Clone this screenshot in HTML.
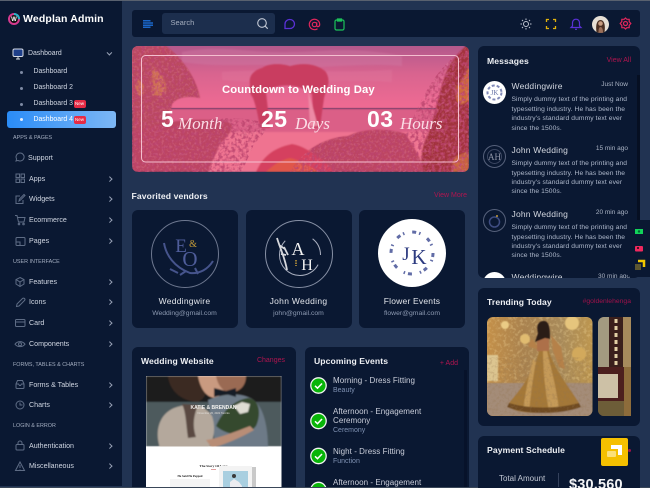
<!DOCTYPE html>
<html><head><meta charset="utf-8"><style>
*{box-sizing:border-box;margin:0;padding:0}
html,body{width:650px;height:488px;overflow:hidden;background:#213352;font-family:"Liberation Sans",sans-serif}
#r{position:relative;width:650px;height:488px;overflow:hidden;filter:blur(.3px)}
.a,.t{position:absolute}
.t{white-space:nowrap;line-height:12px;height:12px}
.card{position:absolute;background:#0a1832;border-radius:6px}
.nav{font-size:7.1px;color:#d0d6e2}
.sub{font-size:6.9px;color:#d0d6e2}
.sec{font-size:5.4px;color:#a3adc0}
.ar{position:absolute;left:108px;width:3.500px;height:3.500px;border-top:1px solid #98a2b6;border-right:1px solid #98a2b6;transform:rotate(45deg)}
.dot{position:absolute;left:20px;width:3px;height:3px;border-radius:50%;background:#7e8aa3}
.new{position:absolute;height:8px;width:12px;border-radius:2px;background:#e62b45;color:#fff;font-size:4.5px;line-height:8px;text-align:center}
.h{font-weight:bold;font-size:8.6px;color:#eef0f4;letter-spacing:.1px}
.pk{font-size:7px;color:#b0154f}
.nm{font-size:8.5px;color:#d3d7e0;letter-spacing:.2px}
.tm{font-size:6.500px;color:#aab3c4}
.ms{font-size:6.700px;color:#aeb8cb;letter-spacing:.1px}
.ev{font-size:8px;color:#c9cdd9;letter-spacing:.05px}
.sb{font-size:7px;color:#7f91b2}
.sc{font-family:'Liberation Serif',serif;font-style:italic;font-size:17px;line-height:20px;height:20px;color:#fbdde6}
.num{font-size:23px;line-height:26px;height:26px;font-weight:bold;color:#fff;letter-spacing:.4px}
svg{position:absolute;overflow:visible}
</style></head><body><div id="r">
<div class="a" style="left:0;top:0;width:650px;height:1px;background:#59616f"></div>

<!-- sidebar -->
<div class="a" style="left:0;top:1px;width:122px;height:485px;background:#0a1832"></div>
<svg style="left:7px;top:12px" width="14" height="14" viewBox="0 0 14 14"><circle cx="7" cy="7" r="5" fill="#111" stroke="#d63a8f" stroke-width="2"/><path d="M7 2a5 5 0 0 1 5 5" fill="none" stroke="#27b6c9" stroke-width="2"/><text x="7" y="9" font-size="6" font-weight="bold" fill="#fff" text-anchor="middle" font-family="Liberation Sans">W</text></svg>
<div class="t" style="left:23px;top:13px;font-size:10.500px;font-weight:bold;color:#fff;letter-spacing:.15px">Wedplan Admin</div>

<svg style="left:12px;top:48px" width="12" height="12" viewBox="0 0 12 12"><rect x="1" y="1" width="10" height="7.500" rx="1.500" fill="#1f3f8a" stroke="#d7dbe5" stroke-width="1"/><path d="M4 11h4M6 9v2" stroke="#d7dbe5"/></svg>
<div class="t nav" style="left:28px;top:48px;font-size:6.900px">Dashboard</div>
<div class="ar" style="top:51px;transform:rotate(135deg)"></div>
<div class="dot" style="top:71px"></div><div class="t sub" style="left:33.500px;top:66px">Dashboard</div>
<div class="dot" style="top:87px"></div><div class="t sub" style="left:33.500px;top:82px">Dashboard 2</div>
<div class="dot" style="top:103px"></div><div class="t sub" style="left:33.500px;top:98px">Dashboard 3</div><div class="new" style="left:73.500px;top:100px">New</div>
<div class="a" style="left:7px;top:111px;width:108.500px;height:17px;border-radius:3px;background:linear-gradient(90deg,#2a8cf7,#7db7f5)"></div>
<div class="dot" style="top:118px;background:#e5eefc"></div><div class="t sub" style="left:33.500px;top:113.500px;color:#fff">Dashboard 4</div><div class="new" style="left:73.500px;top:116px">New</div>

<div class="t sec" style="left:13px;top:132px">APPS &amp; PAGES</div>
<svg style="left:14px;top:151px" width="12" height="12" viewBox="0 0 12 12" fill="none" stroke="#5e6c85"><path d="M6 2a4 4 0 1 1-2 7.400L2 10l.6-2A4 4 0 0 1 6 2z"/></svg>
<div class="t nav" style="left:28px;top:152px">Support</div>
<svg style="left:14px;top:172px" width="12" height="12" viewBox="0 0 12 12" fill="none" stroke="#5e6c85"><rect x="2" y="2" width="3.500" height="3.500"/><rect x="7" y="2" width="3.500" height="3.500"/><rect x="2" y="7" width="3.500" height="3.500"/><rect x="7" y="7" width="3.500" height="3.500"/></svg>
<div class="t nav" style="left:29px;top:172.500px">Apps</div><div class="ar" style="top:176.500px"></div>
<svg style="left:14px;top:193px" width="12" height="12" viewBox="0 0 12 12" fill="none" stroke="#5e6c85"><path d="M9 7v3.500H2V3h4M5 8l.5-2L10 1.500l1 1L6.500 7z"/></svg>
<div class="t nav" style="left:29px;top:193px">Widgets</div><div class="ar" style="top:197px"></div>
<svg style="left:14px;top:214px" width="12" height="12" viewBox="0 0 12 12" fill="none" stroke="#5e6c85"><path d="M1 1.500h2l1.500 6.500h5.500l1-4.500H3.500"/><circle cx="5" cy="10" r=".8"/><circle cx="9.500" cy="10" r=".8"/></svg>
<div class="t nav" style="left:29px;top:214px">Ecommerce</div><div class="ar" style="top:218px"></div>
<svg style="left:14px;top:235px" width="12" height="12" viewBox="0 0 12 12" fill="none" stroke="#5e6c85"><rect x="2" y="2.500" width="9" height="8" rx="1"/><path d="M2 7h4v3.500"/></svg>
<div class="t nav" style="left:29px;top:235px">Pages</div><div class="ar" style="top:239px"></div>

<div class="t sec" style="left:13px;top:256px">USER INTERFACE</div>
<svg style="left:14px;top:276px" width="12" height="12" viewBox="0 0 12 12" fill="none" stroke="#5e6c85"><path d="M6 1.500l4 2v4.500l-4 2.500-4-2.500V3.500zM2 3.500l4 2.500 4-2.500M6 6v4.500"/></svg>
<div class="t nav" style="left:29px;top:275.500px">Features</div><div class="ar" style="top:279.500px"></div>
<svg style="left:14px;top:296px" width="12" height="12" viewBox="0 0 12 12" fill="none" stroke="#5e6c85"><path d="M2.500 10.500l.5-2.500L8.500 2.500a1.400 1.400 0 0 1 2 2L5 10z"/></svg>
<div class="t nav" style="left:29px;top:296px">Icons</div><div class="ar" style="top:300px"></div>
<svg style="left:14px;top:317px" width="12" height="12" viewBox="0 0 12 12" fill="none" stroke="#5e6c85"><rect x="1.500" y="2.500" width="9.500" height="7" rx="1"/><path d="M1.500 5h9.500"/></svg>
<div class="t nav" style="left:29px;top:317px">Card</div><div class="ar" style="top:321px"></div>
<svg style="left:14px;top:338px" width="12" height="12" viewBox="0 0 12 12" fill="none" stroke="#5e6c85"><path d="M1 6.200C3.500 2.800 8.500 2.800 11 6.200 8.500 9.500 3.500 9.500 1 6.200z"/><circle cx="6" cy="6.200" r="1.500"/></svg>
<div class="t nav" style="left:29px;top:338px">Components</div><div class="ar" style="top:342px"></div>

<div class="t sec" style="left:13px;top:358.500px">FORMS, TABLES &amp; CHARTS</div>
<svg style="left:14px;top:378px" width="12" height="12" viewBox="0 0 12 12" fill="none" stroke="#5e6c85"><path d="M2 6l1.500-3.500h5L10 6v3.500a1 1 0 0 1-1 1H3a1 1 0 0 1-1-1zM2 6h2.500l1 1.500h1L7.500 6H10"/></svg>
<div class="t nav" style="left:29px;top:378.500px">Forms &amp; Tables</div><div class="ar" style="top:382.500px"></div>
<svg style="left:14px;top:399px" width="12" height="12" viewBox="0 0 12 12" fill="none" stroke="#5e6c85"><circle cx="6" cy="6" r="4"/><path d="M6 3.500V6h2.500"/></svg>
<div class="t nav" style="left:29px;top:399px">Charts</div><div class="ar" style="top:403px"></div>

<div class="t sec" style="left:13px;top:420px">LOGIN &amp; ERROR</div>
<svg style="left:14px;top:439px" width="12" height="12" viewBox="0 0 12 12" fill="none" stroke="#5e6c85"><rect x="2" y="5.500" width="8" height="5.500" rx="1"/><path d="M4 5.500V4a2 2 0 0 1 4 0v1.500"/></svg>
<div class="t nav" style="left:29px;top:439.500px">Authentication</div><div class="ar" style="top:443.500px"></div>
<svg style="left:14px;top:460px" width="12" height="12" viewBox="0 0 12 12" fill="none" stroke="#5e6c85"><path d="M6 2l4.500 8.500h-9zM6 5v3M6 9v.5"/></svg>
<div class="t nav" style="left:29px;top:460px">Miscellaneous</div><div class="ar" style="top:464px"></div>

<!-- topbar -->
<div class="card" style="left:131.500px;top:10px;width:508.500px;height:27px;border-radius:3px"></div>
<svg style="left:142.500px;top:20px" width="10" height="8" viewBox="0 0 10 8"><path d="M0 .8h7.500M0 3h10M0 5.200h10M0 7.300h7.500" stroke="#1a66c8" stroke-width="1.500"/></svg>
<div class="a" style="left:161.500px;top:13px;width:113px;height:21px;border-radius:3px;background:#1c2e4d"></div>
<div class="t" style="left:170.500px;top:17px;font-size:7.500px;color:#a4adbe">Search</div>
<svg style="left:256px;top:17px" width="13" height="13" viewBox="0 0 13 13" fill="none" stroke="#c4cad6" stroke-width="1.100"><circle cx="6" cy="6" r="4.300"/><path d="M9.200 9.200l2.500 2.500"/></svg>
<svg style="left:283px;top:18px" width="13" height="13" viewBox="0 0 13 13" fill="none" stroke="#5a31d6" stroke-width="1.300"><path d="M7 1.500a4.500 4.500 0 0 1 0 9H2V6.200A4.600 4.600 0 0 1 7 1.500z"/></svg>
<svg style="left:308px;top:17.500px" width="13" height="13" viewBox="0 0 13 13" fill="none" stroke="#e0275c" stroke-width="1.200"><circle cx="6.500" cy="6.500" r="2.200"/><path d="M8.700 4.300v3.200c0 1.800 3 1.500 3-1A5.200 5.200 0 1 0 9.500 10.700"/></svg>
<svg style="left:333px;top:17.500px" width="13" height="13" viewBox="0 0 13 13" fill="none" stroke="#1cc15a" stroke-width="1.200"><rect x="2" y="2" width="9" height="10" rx="1.500"/><path d="M4.500 1h4v2h-4z"/></svg>
<svg style="left:520px;top:18px" width="12" height="12" viewBox="0 0 12 12" fill="none" stroke="#bfc5d1" stroke-width="1"><circle cx="6" cy="6" r="2.500"/><path d="M6 .5v1.500M6 10v1.500M.5 6H2M10 6h1.500M2 2l1 1M9 9l1 1M2 10l1-1M9 3l1-1"/></svg>
<svg style="left:545px;top:18px" width="12" height="12" viewBox="0 0 12 12" fill="none" stroke="#e2b30d" stroke-width="1.300"><path d="M1.500 4V1.500H4M8 1.500h2.500V4M10.500 8v2.500H8M4 10.500H1.500V8"/></svg>
<svg style="left:570px;top:17.500px" width="12" height="12" viewBox="0 0 12 12" fill="none" stroke="#5a31d6" stroke-width="1.200"><path d="M6 1.200A3.500 3.500 0 0 0 2.500 4.700v3.300L1 9.500h10L9.500 8V4.700A3.500 3.500 0 0 0 6 1.200zM5 11.300h2"/></svg>
<svg style="left:592px;top:15.500px" width="17" height="17" viewBox="0 0 17 17"><circle cx="8.500" cy="8.500" r="8.500" fill="#e6dfd5"/><path d="M4.500 16c-1-6 0-12 4-12s5 6 4 12c-2 1.300-6 1.300-8 0z" fill="#4a2f22"/><path d="M6.500 16.500c0-3.500.5-5.500 2-5.500s2.500 2 2.500 5.500c-1.500.5-3 .5-4.500 0z" fill="#9b6f5a"/><circle cx="8.500" cy="7.500" r="2.300" fill="#c79c80"/></svg>
<svg style="left:619px;top:17px" width="13" height="13" viewBox="0 0 13 13" fill="none" stroke="#e0275c" stroke-width="1.200"><path d="M6.500 1l1.300 1.300h2.400v2.400L11.800 6.500l-1.600 1.800v2.400H7.800L6.500 12 5.200 10.700H2.800V8.300L1.200 6.500l1.600-1.800V2.300h2.400z"/><circle cx="6.500" cy="6.500" r="2"/></svg>

<!-- banner -->
<svg style="left:131.500px;top:46px" width="337" height="126" viewBox="0 0 337 126">
<defs><linearGradient id="s" x1="0" y1="0" x2="0" y2="1"><stop offset="0" stop-color="#b3598c"/><stop offset=".45" stop-color="#d9648f"/><stop offset="1" stop-color="#f06b93"/></linearGradient>
<filter id="n" x="0" y="0" width="100%" height="100%"><feTurbulence type="fractalNoise" baseFrequency=".3" numOctaves="2" seed="4"/><feColorMatrix values="0 0 0 0 .5 0 0 0 0 .06 0 0 0 0 .16 4 0 0 0 -1.700"/></filter>
<filter id="n2" x="0" y="0" width="100%" height="100%"><feTurbulence type="fractalNoise" baseFrequency=".4" numOctaves="2" seed="9"/><feColorMatrix values="0 0 0 0 .9 0 0 0 0 .36 0 0 0 0 .42 4 0 0 0 -1.900"/></filter>
<filter id="b1" x="-10%" y="-10%" width="120%" height="120%"><feGaussianBlur stdDeviation=".9"/></filter>
<clipPath id="bc"><rect width="337" height="126" rx="6"/></clipPath>
<clipPath id="tc"><path d="M0 0h34c14 10 30 30 34 52-10-2-22-2-28 6l-6 26c22-10 66-16 96-8 10 4 0 14-8 22l-12 28H0zM158 126c10-18 30-34 58-36 16-8 40-8 58-2 10-20 24-66 63-88v126z"/></clipPath></defs>
<g clip-path="url(#bc)">
<rect width="337" height="62" fill="url(#s)"/>
<g filter="url(#b1)">
<path d="M50 6c40-8 70 2 110 0 30 0 60-6 110 4v10c-40-4-90 4-120 0-30-3-60 2-100-4z" fill="#d07aa5" opacity=".4"/>
<path d="M90 26c50-4 100 2 170-2v12c-60-4-110 4-170-2z" fill="#e47fa5" opacity=".25"/>
<rect y="62" width="337" height="28" fill="#db5f87"/>
<rect y="62" width="337" height="1.500" fill="#b04c78"/>
<rect y="86" width="337" height="40" fill="#ef7390"/>
<path d="M0 0h34c14 10 30 30 34 52-10-2-22-2-28 6l-6 28H0z" fill="#bb4a60"/>
<path d="M20 20c8 6 14 14 14 22s-8 10-14 6zM6 34c6 2 8 10 4 16-6 0-8-10-4-16z" fill="#cf6e55"/>
<path d="M0 86c22-10 66-16 96-10 10 4 0 14-8 22l-12 28H0z" fill="#bd4563"/>
<path d="M158 126c10-18 30-34 58-36 16-8 40-8 58-2l22 38z" fill="#bd4462"/>
<path d="M337 0v126h-44c-6-8-4-26 4-40 6-16 10-40 16-56 4-12 12-22 21-30z" fill="#a2303d"/>
<path d="M325 40c6-6 10-16 12-20v34c-6 6-16 8-12-14z" fill="#cf6a3b"/>
<path d="M322 112c6-4 12-6 15-6v20h-18z" fill="#c9653c"/>
<path d="M118 38c-2-8 4-14 12-16 8-6 22-4 28-2 14-4 28-2 36 6 6 10 0 18-2 26l-4 30h-6l-2-34c-12-10-34-12-46-2l4 36h-10c-2-12-4-22-7-30-3-4-4-8-3-14z" fill="#c93c60"/>
<path d="M176 44l10 36h-8z" fill="#ed8aa5"/>
<path d="M124 126c6-14 16-24 36-28 14 2 32 16 42 28z" fill="#d5415f"/>
<path d="M134 126c6-6 14-12 24-14 10 2 20 8 28 14z" fill="#e4603f" opacity=".7"/>
</g>
<g clip-path="url(#tc)"><rect width="337" height="126" filter="url(#n)" opacity=".85"/><rect width="337" height="126" filter="url(#n2)" opacity=".2"/></g>
</g>
<rect x="9.500" y="9.500" width="317" height="106.500" rx="4" fill="none" stroke="#f4bfcf" stroke-width="1"/>
</svg>
<div class="t" style="left:222px;top:84px;font-size:11.300px;font-weight:bold;color:#fff;letter-spacing:.1px">Countdown to Wedding Day</div>
<div class="t num" style="left:161px;top:106px">5</div>
<div class="t sc" style="left:178px;top:114px">Month</div>
<div class="t num" style="left:261px;top:106px">25</div>
<div class="t sc" style="left:295px;top:114px">Days</div>
<div class="t num" style="left:367px;top:106px">03</div>
<div class="t sc" style="left:400px;top:114px">Hours</div>

<!-- vendors -->
<div class="t h" style="left:131.500px;top:190px">Favorited vendors</div>
<div class="t pk" style="right:183px;top:190px">View More</div>
<div class="card" style="left:131.500px;top:209.500px;width:106px;height:118px"></div>
<div class="card" style="left:245.500px;top:209.500px;width:106px;height:118px"></div>
<div class="card" style="left:359px;top:209.500px;width:106px;height:118px"></div>
<svg style="left:150px;top:219px" width="70" height="70" viewBox="0 0 70 70" fill="none"><circle cx="35" cy="35" r="33.500" stroke="#6e7890"/><text x="31" y="33" font-size="19" fill="#4f5d9a" font-family="Liberation Serif" text-anchor="middle">E</text><text x="43" y="28" font-size="10" fill="#c49b38" font-family="Liberation Serif" text-anchor="middle">&amp;</text><text x="40" y="47" font-size="21" fill="#4f5d9a" font-family="Liberation Serif" text-anchor="middle">O</text><path d="M14 24c2 12 10 24 26 30 10 1 18-4 23-12M20 50l8 4M30 56l6-4M48 55l-3-6" stroke="#46548c" stroke-width="2"/></svg>
<svg style="left:264px;top:219px" width="70" height="70" viewBox="0 0 70 70" fill="none"><circle cx="35" cy="35" r="33.500" stroke="#8790a5"/><circle cx="36" cy="36" r="20.500" stroke="#a9afbf" stroke-dasharray="70 30" stroke-dashoffset="-10"/><text x="34" y="36" font-size="18" fill="#f1f1f1" font-family="Liberation Serif" text-anchor="middle">A</text><text x="43" y="51" font-size="16" fill="#f1f1f1" font-family="Liberation Serif" text-anchor="middle">H</text><path d="M13 19c3 10 8 20 10 32M15 26l6 4M17 35l5 1M24 36l-4-8" stroke="#d6d8dd" stroke-width="1.800"/><path d="M32 41v6" stroke="#c49b38" stroke-dasharray="1.500 1" stroke-width="1.500"/></svg>
<svg style="left:378px;top:219px" width="68" height="68" viewBox="0 0 68 68" fill="none"><circle cx="34" cy="34" r="34" fill="#fff"/><circle cx="34" cy="34" r="21" stroke="#3a4790" stroke-width="3" stroke-dasharray="4 3 1.500 8" opacity=".8"/><text x="28" y="41" font-size="19" fill="#2d3b80" font-family="Liberation Serif" text-anchor="middle">J</text><text x="41" y="45" font-size="21" fill="#2d3b80" font-family="Liberation Serif" text-anchor="middle">K</text></svg>
<div class="t" style="left:131.500px;width:106px;text-align:center;top:295px;font-size:8.500px;color:#e1e4ea;letter-spacing:.25px">Weddingwire</div>
<div class="t" style="left:131.500px;width:106px;text-align:center;top:307.500px;font-size:6.800px;color:#8d9ab2">Wedding@gmail.com</div>
<div class="t" style="left:245.500px;width:106px;text-align:center;top:295px;font-size:8.500px;color:#e1e4ea;letter-spacing:.3px">John Wedding</div>
<div class="t" style="left:245.500px;width:106px;text-align:center;top:307.500px;font-size:6.800px;color:#8d9ab2">john@gmail.com</div>
<div class="t" style="left:359px;width:106px;text-align:center;top:295px;font-size:8.500px;color:#e1e4ea;letter-spacing:.2px">Flower Events</div>
<div class="t" style="left:359px;width:106px;text-align:center;top:307.500px;font-size:6.800px;color:#8d9ab2">flower@gmail.com</div>

<!-- website -->
<div class="card" style="left:131.500px;top:347px;width:164px;height:150px"></div>
<div class="t h" style="left:141px;top:355px">Wedding Website</div>
<div class="t pk" style="right:365px;top:355px">Changes</div>
<svg style="left:145.500px;top:375.500px" width="135.500" height="113" viewBox="0 0 135.500 113">
<defs><filter id="b2" x="-5%" y="-5%" width="110%" height="110%"><feGaussianBlur stdDeviation=".9"/></filter><clipPath id="pc"><rect width="135.500" height="70.500"/></clipPath></defs>
<rect width="135.500" height="113" fill="#fff"/>
<g clip-path="url(#pc)"><g filter="url(#b2)">
<rect width="135.500" height="70.500" fill="#4d5a5d"/>
<rect width="135.500" height="26" fill="#1f1b1a"/>
<path d="M22 0h38c4 12 0 22-8 26-12 0-28-8-30-26z" fill="#3a2a22"/>
<path d="M52 0h28c2 10-2 18-10 22-10 0-16-10-18-22z" fill="#c99a80"/>
<path d="M70 0h30c0 8-4 14-12 16-10 2-16-6-18-16z" fill="#9a6a52"/>
<path d="M62 24c14-6 30-8 42-2 14 6 18 30 18 50H70z" fill="#6d7a87"/>
<path d="M68 12l12 3 10-3v9l-10-3-12 3z" fill="#161c28"/>
<path d="M14 72c-6-18 0-34 14-40 16-6 30-4 38 8 4 12 2 24-4 32z" fill="#b4a89c"/>
<path d="M36 28c4 8 4 20 6 34l8-1c-4-12-2-22 2-32z" fill="#5a4a42"/>
<path d="M70 50c6-14 18-26 32-28 14 2 12 20 8 28-8 10-26 12-40 0z" fill="#36482f"/>
<path d="M88 30l8-4 8 2-2 8-8 2z" fill="#dedcd2"/>
<path d="M60 64c14-2 28-8 44-14l4 4c-14 8-28 14-42 18z" fill="#b88d76"/>
</g></g>
<text x="67.500" y="33" font-size="5" font-weight="bold" fill="#f4f3f0" text-anchor="middle" font-family="Liberation Sans">KATIE &amp; BRENDAN</text>
<text x="67.500" y="38" font-size="2.600" fill="#e0ddd8" text-anchor="middle" font-family="Liberation Sans">November 20, 2021 Toronto</text>
<text x="67.500" y="91" font-size="3.500" font-weight="bold" fill="#222" text-anchor="middle" font-family="Liberation Serif">The Story Of Love</text>
<rect x="65" y="93" width="5" height="1" fill="#e0a0a0"/>
<text x="44" y="101" font-size="3" font-weight="bold" fill="#222" text-anchor="middle" font-family="Liberation Serif">He Said He Popped</text>
<path d="M24 104h40M24 106h40M24 108h40M24 110h40" stroke="#e2e2e2" stroke-width=".8"/>
<rect x="75" y="91" width="35" height="22" fill="#c9c9c9"/><rect x="73" y="90" width="33" height="23" fill="#f3f3f3"/><rect x="77" y="95" width="25" height="18" fill="#a9cfe0"/><path d="M84 113v-7l4-3 5 3 3 4v3z" fill="#ececf0"/><circle cx="88" cy="100" r="2" fill="#3a3a3a"/>
</svg>

<!-- events -->
<div class="card" style="left:304.500px;top:347px;width:164px;height:150px"></div>
<div class="t h" style="left:314px;top:355px">Upcoming Events</div>
<div class="t pk" style="right:192px;top:357.500px">+ Add</div>
<div class="a" style="left:464px;top:370px;width:3px;height:118px;background:#07122a"></div>
<svg style="left:310px;top:377px" width="17" height="111" viewBox="0 0 17 111">
<g><circle cx="8.500" cy="8.500" r="7.700" fill="#08b508" stroke="#f2f4f2" stroke-width="1.300"/><path d="M5 8.800l2.500 2.400 4.500-4.700" fill="none" stroke="#fff" stroke-width="1.500"/></g>
<g transform="translate(0,35.500)"><circle cx="8.500" cy="8.500" r="7.700" fill="#08b508" stroke="#f2f4f2" stroke-width="1.300"/><path d="M5 8.800l2.500 2.400 4.500-4.700" fill="none" stroke="#fff" stroke-width="1.500"/></g>
<g transform="translate(0,70.500)"><circle cx="8.500" cy="8.500" r="7.700" fill="#08b508" stroke="#f2f4f2" stroke-width="1.300"/><path d="M5 8.800l2.500 2.400 4.500-4.700" fill="none" stroke="#fff" stroke-width="1.500"/></g>
<g transform="translate(0,104.500)"><circle cx="8.500" cy="8.500" r="7.700" fill="#08b508" stroke="#f2f4f2" stroke-width="1.300"/></g>
</svg>
<div class="t ev" style="left:333px;top:375px">Morning - Dress Fitting</div><div class="t sb" style="left:333px;top:384.500px">Beauty</div>
<div class="t ev" style="left:333px;top:406px">Afternoon - Engagement</div><div class="t ev" style="left:333px;top:415px">Ceremony</div><div class="t sb" style="left:333px;top:425px">Ceremony</div>
<div class="t ev" style="left:333px;top:446px">Night - Dress Fitting</div><div class="t sb" style="left:333px;top:455.500px">Function</div>
<div class="t ev" style="left:333px;top:477px">Afternoon - Engagement</div>

<!-- bottom strip -->
<div class="a" style="left:0;top:486.500px;width:650px;height:2px;background:#3a4759"></div>

<!-- messages -->
<div class="card" style="left:477.500px;top:46px;width:162.500px;height:232px;overflow:hidden">
<div class="a" style="left:159.500px;top:29px;width:3px;height:203px;background:#060f22"></div>
</div>
<div class="t h" style="left:487px;top:55px">Messages</div>
<div class="t pk" style="right:19px;top:55px">View All</div>
<svg style="left:483px;top:81px" width="23" height="23" viewBox="0 0 23 23" fill="none"><circle cx="11.500" cy="11.500" r="11.500" fill="#fff"/><circle cx="11.500" cy="11.500" r="7" stroke="#8089b8" stroke-width="2" stroke-dasharray="3 2"/><text x="11.500" y="14" font-size="7" fill="#6a76a8" text-anchor="middle" font-family="Liberation Serif">JK</text></svg>
<svg style="left:483px;top:145px" width="23" height="23" viewBox="0 0 23 23" fill="none"><circle cx="11.500" cy="11.500" r="11" stroke="#56617b"/><circle cx="11.500" cy="11.500" r="7" stroke="#3c4762"/><text x="11.500" y="15" font-size="9" fill="#8f95a6" text-anchor="middle" font-family="Liberation Serif">AH</text></svg>
<svg style="left:483px;top:209px" width="23" height="23" viewBox="0 0 23 23" fill="none"><circle cx="11.500" cy="11.500" r="11" stroke="#56617b"/><circle cx="11.500" cy="13" r="5" stroke="#3e4c80" stroke-width="1.500"/><circle cx="14" cy="7" r="1" fill="#c49b38"/></svg>

<div class="t nm" style="left:511.500px;top:79.500px">Weddingwire</div><div class="t tm" style="right:22px;top:78.500px">Just Now</div>
<div class="t ms" style="left:511.500px;top:94px">Simply dummy text of the printing and</div>
<div class="t ms" style="left:511.500px;top:103.500px">typesetting industry. He has been the</div>
<div class="t ms" style="left:511.500px;top:113px">industry's standard dummy text ever</div>
<div class="t ms" style="left:511.500px;top:122.500px">since the 1500s.</div>

<div class="t nm" style="left:511.500px;top:143.500px">John Wedding</div><div class="t tm" style="right:22px;top:142.500px">15 min ago</div>
<div class="t ms" style="left:511.500px;top:158px">Simply dummy text of the printing and</div>
<div class="t ms" style="left:511.500px;top:167.500px">typesetting industry. He has been the</div>
<div class="t ms" style="left:511.500px;top:177px">industry's standard dummy text ever</div>
<div class="t ms" style="left:511.500px;top:186px">since the 1500s.</div>

<div class="t nm" style="left:511.500px;top:207.500px">John Wedding</div><div class="t tm" style="right:22px;top:206.500px">20 min ago</div>
<div class="t ms" style="left:511.500px;top:222px">Simply dummy text of the printing and</div>
<div class="t ms" style="left:511.500px;top:231.500px">typesetting industry. He has been the</div>
<div class="t ms" style="left:511.500px;top:241px">industry's standard dummy text ever</div>
<div class="t ms" style="left:511.500px;top:250px">since the 1500s.</div>

<div class="a" style="left:480px;top:272px;width:155px;height:6px;overflow:hidden">
<div class="a" style="left:3px;top:0;width:23px;height:23px;border-radius:50%;background:#fff"></div>
<div class="t nm" style="left:31.500px;top:-1px">Weddingwire</div><div class="t tm" style="left:118px;top:-1px">30 min ago</div></div>

<!-- side floater -->
<div class="a" style="left:627px;top:220px;width:23px;height:57px;border-radius:4px 0 0 4px;background:#0a1832"></div>
<svg style="left:634px;top:226px" width="12" height="46" viewBox="0 0 12 46"><rect x="1" y="3" width="8" height="5" fill="#12d35a"/><circle cx="5" cy="5.500" r="1.200" fill="#063"/><rect x="1" y="20" width="8" height="5.500" rx="1" fill="#f0285e"/><circle cx="4" cy="22" r="1" fill="#111"/><rect x="1" y="38" width="6" height="6" fill="#5c5630"/><path d="M4 35h6v6" fill="none" stroke="#f3c800" stroke-width="2.500"/></svg>

<!-- trending -->
<div class="card" style="left:477.500px;top:288px;width:162.500px;height:138px"></div>
<div class="t h" style="left:487px;top:296px">Trending Today</div>
<div class="t" style="right:19px;top:296px;font-size:6.800px;color:#a0124a">#goldenlehenga</div>
<svg style="left:487px;top:317px" width="105.500" height="99" viewBox="0 0 105.500 99">
<defs><linearGradient id="tr" x1="0" y1="0" x2="1" y2="0"><stop offset="0" stop-color="#c49049"/><stop offset=".35" stop-color="#a9824f"/><stop offset=".7" stop-color="#a88a5a"/><stop offset="1" stop-color="#bd964f"/></linearGradient>
<clipPath id="tc1"><rect width="105.500" height="99" rx="6"/></clipPath><filter id="b3" x="-5%" y="-5%" width="110%" height="110%"><feGaussianBlur stdDeviation=".5"/></filter>
<filter id="n3" x="0" y="0" width="100%" height="100%"><feTurbulence type="fractalNoise" baseFrequency=".3" numOctaves="2" seed="7"/><feColorMatrix values="0 0 0 0 .92 0 0 0 0 .72 0 0 0 0 .36 4 0 0 0 -1.900"/></filter>
<filter id="n4" x="0" y="0" width="100%" height="100%"><feTurbulence type="fractalNoise" baseFrequency=".35" numOctaves="2" seed="12"/><feColorMatrix values="0 0 0 0 .3 0 0 0 0 .18 0 0 0 0 .08 4 0 0 0 -1.900"/></filter></defs>
<g clip-path="url(#tc1)"><rect width="105.500" height="99" fill="url(#tr)"/>
<rect width="105.500" height="66" filter="url(#n3)" opacity=".28"/>
<g filter="url(#b3)">
<rect x="0" y="38" width="11" height="26" fill="#dcc590"/>
<rect x="0" y="66" width="105.500" height="33" fill="#a48c78"/>
<circle cx="38" cy="22" r="5" fill="#e0bb70"/><circle cx="85" cy="6" r="7" fill="#e6c57d"/><circle cx="92" cy="37" r="7" fill="#d2a95c"/><circle cx="18" cy="8" r="4" fill="#eacb85"/>
<path d="M52 34c-3 18-18 38-30 52-2 6 8 10 32 10 22 0 38-4 38-10-10-16-26-36-30-52z" fill="#a47838"/>
<path d="M56 34c0 18 2 40 6 60l10-1c-2-20-8-42-12-59zM46 42c-4 16-8 34-10 52l6 1c2-18 4-36 7-50z" fill="#c59a58"/>
<path d="M50 18h12v16H50z" fill="#ad6f4a"/>
<path d="M45 22c-3 3-4 6-3 8l8 2v-4zM64 18l10 12 4 22-6-2-6-16z" fill="#b5814a"/>
<path d="M57 4c-6 0-8 5-6 12l-3 9 10-4 5 1c0-8 0-18-6-18z" fill="#2a1a16"/>
<path d="M22 86c20 6 48 6 70 0l2 4c-20 8-56 8-74 0z" fill="#6f4b22"/>
</g>
<rect y="40" width="105.500" height="59" filter="url(#n4)" opacity=".25"/>
</g>
</svg>
<svg style="left:598px;top:317px" width="33" height="99" viewBox="0 0 33 99">
<defs><clipPath id="tc2"><path d="M6 0h27v99H6a6 6 0 0 1-6-6V6a6 6 0 0 1 6-6z"/></clipPath></defs>
<g clip-path="url(#tc2)">
<rect width="33" height="99" fill="#6b4e3a"/>
<rect width="11" height="50" fill="#a39a80"/>
<rect x="11" y="0" width="14" height="50" fill="#3a1f1c"/>
<path d="M18 2v48" stroke="#e2d0a6" stroke-width="3" stroke-dasharray="4 3"/>
<rect x="25" y="0" width="8" height="50" fill="#a68a5c"/>
<rect x="0" y="50" width="26" height="34" fill="#4c1f1e"/>
<rect x="0" y="57" width="20" height="24" fill="#cdc1a6"/>
<rect x="0" y="84" width="33" height="15" fill="#6d5d38"/>
<path d="M26 50h7v49h-7z" fill="#8d6c3b"/>
</g></svg>

<!-- payment -->
<div class="card" style="left:477.500px;top:436px;width:162.500px;height:60px"></div>
<div class="t h" style="left:487px;top:444px">Payment Schedule</div>
<div class="a" style="left:628px;top:449px;width:3px;height:3px;border-radius:50%;background:#a0124a"></div>
<div class="t" style="left:499px;top:472.500px;font-size:8px;color:#c1c7d3">Total Amount</div>
<div class="a" style="left:558px;top:473px;width:1px;height:14px;background:#34415c"></div>
<div class="t" style="left:569px;top:476px;font-size:14.500px;line-height:18px;height:18px;color:#f3f4f6;letter-spacing:.2px;font-weight:bold">$30,560</div>
<div class="a" style="left:600.500px;top:438px;width:27px;height:27.500px;border-radius:2px;background:#f5c000"></div>
<svg style="left:607px;top:445px" width="15" height="14" viewBox="0 0 15 14"><path d="M4 0h11v10h-4V4H4z" fill="#fff"/><rect x="0" y="6" width="9" height="6" rx="1" fill="#fbe07a"/></svg>
</div></body></html>
